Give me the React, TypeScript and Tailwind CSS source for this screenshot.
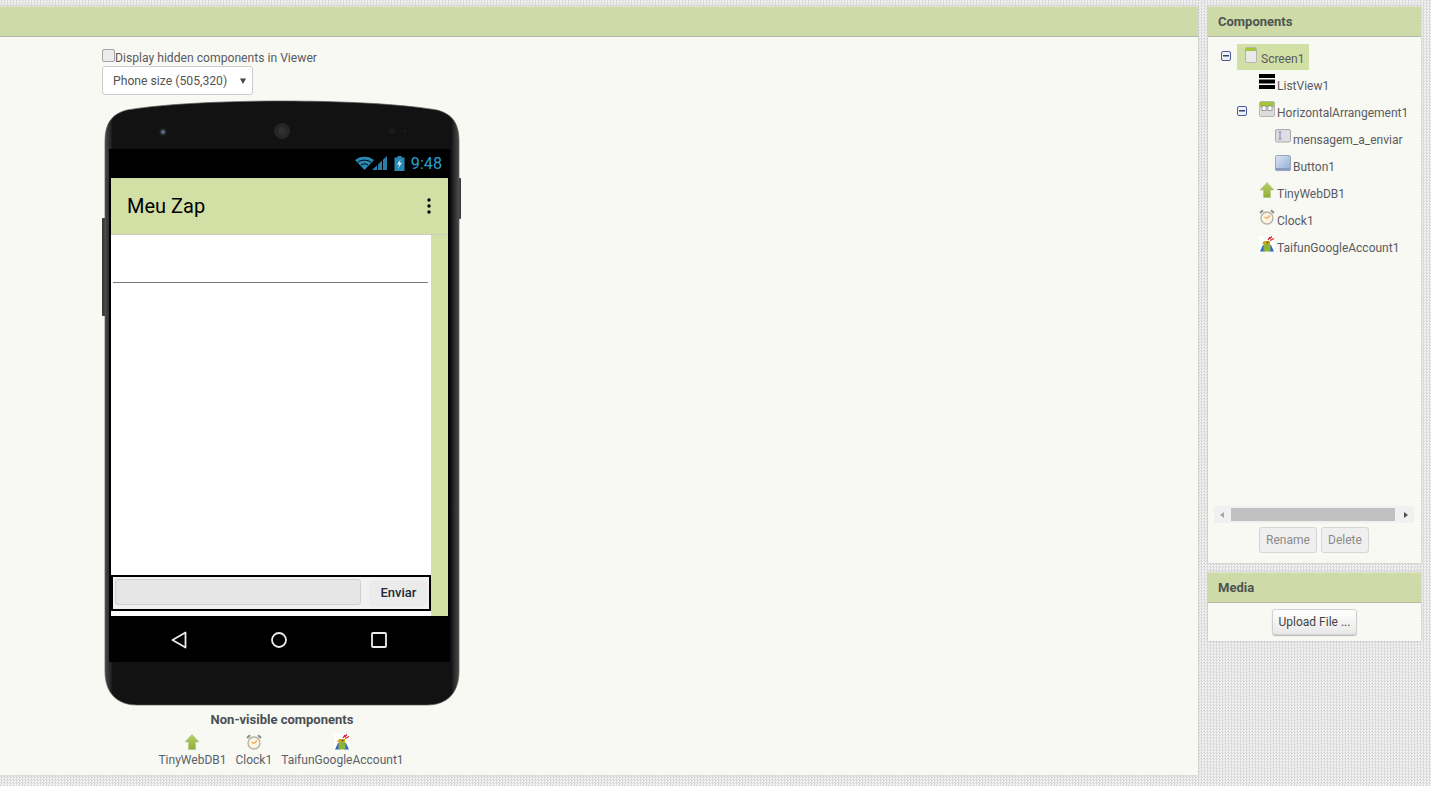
import React from "react";

const Minus = () => (
  <svg width="10" height="10" viewBox="0 0 10 10" className="block">
    <rect x="0.5" y="0.5" width="9" height="9" rx="1.5" fill="#eef0f6" stroke="#4a5a9a" />
    <rect x="2" y="4" width="6" height="1.5" fill="#3a3f70" />
  </svg>
);

const ScreenIcon = () => (
  <svg width="16" height="17" viewBox="0 0 16 17" className="block">
    <rect x="2.5" y="0.5" width="11" height="15" rx="1.5" fill="#e9e9e9" stroke="#b4b4b4" />
    <rect x="3" y="1" width="10" height="3" fill="#a4c639" />
  </svg>
);
const ListIcon = () => (
  <svg width="16" height="16" viewBox="0 0 16 16" className="block">
    <rect y="0" width="16" height="4" fill="#000" />
    <rect y="5.5" width="16" height="4" fill="#000" />
    <rect y="11" width="16" height="4" fill="#000" />
  </svg>
);
const HArrangeIcon = () => (
  <svg width="16" height="16" viewBox="0 0 16 16" className="block">
    <rect x="0.5" y="0.5" width="15" height="15" rx="1.5" fill="#dcdcdc" stroke="#b8b8b8" />
    <rect x="1" y="1" width="14" height="5" fill="#a4c639" />
    <rect x="3" y="5" width="4" height="4.5" fill="#fff" stroke="#8a8a8a" strokeWidth="0.8" />
    <rect x="9" y="5" width="4" height="4.5" fill="#fff" stroke="#8a8a8a" strokeWidth="0.8" />
  </svg>
);
const TextIcon = () => (
  <svg width="16" height="14" viewBox="0 0 16 14" className="block">
    <rect x="0.5" y="0.5" width="15" height="12.5" rx="1.5" fill="#dedee2" stroke="#a9a9a9" />
    <path d="M3.5 3h3M3.5 10h3M5 3v7" stroke="#7480b0" strokeWidth="0.9" fill="none" />
  </svg>
);
const ButtonIcon = () => (
  <svg width="16" height="16" viewBox="0 0 16 16" className="block">
    <defs>
      <linearGradient id="btnG" x1="0" y1="0" x2="1" y2="1">
        <stop offset="0" stopColor="#dfe8f5" />
        <stop offset="1" stopColor="#8ea9d4" />
      </linearGradient>
    </defs>
    <rect x="0.5" y="0.5" width="15" height="15" rx="1.5" fill="url(#btnG)" stroke="#9aa8be" />
    <rect x="0.5" y="13" width="15" height="2.5" fill="#8a9cc0" />
  </svg>
);
const ArrowIcon = () => (
  <svg width="16" height="16" viewBox="0 0 16 16" className="block">
    <defs>
      <linearGradient id="arrG" x1="0" y1="0" x2="0" y2="1">
        <stop offset="0" stopColor="#b8cf66" />
        <stop offset="1" stopColor="#8fae35" />
      </linearGradient>
    </defs>
    <path d="M8 0.5 15 8H11.5V15.5H4.5V8H1Z" fill="url(#arrG)" stroke="#aab98a" strokeWidth="0.5" />
  </svg>
);
const ClockIcon = () => (
  <svg width="16" height="16" viewBox="0 0 16 16" className="block">
    <path d="M1 4 4 1.2M15 4 12 1.2" stroke="#8c8c8c" strokeWidth="2" fill="none" />
    <circle cx="8" cy="9" r="6" fill="#fbf4e2" stroke="#b5b0a4" strokeWidth="1.3" />
    <path d="M8 9.5 11 6.5M8 9.5 5.5 8" stroke="#f0a94a" strokeWidth="1.2" fill="none" />
  </svg>
);
const TaifunIcon = () => (
  <svg width="16" height="16" viewBox="0 0 16 16" className="block">
    <rect width="16" height="16" fill="#fff" />
    <path d="M1 15.5 4 9h2v6.5ZM15 15.5 12 9h-2v6.5Z" fill="#2a69c4" />
    <rect x="4.5" y="8" width="7" height="7.5" rx="1" fill="#8fb23a" />
    <path d="M3 8 5 5h6v3Z" fill="#c9a716" />
    <circle cx="8.5" cy="6.5" r="0.8" fill="#333" />
    <path d="M9 4 11 1M11 4.5 15 2.5M10.5 3 13 0.5" stroke="#d8141c" strokeWidth="1.1" fill="none" />
  </svg>
);

const Row = ({ icon, label }: { icon: React.ReactNode; label: string }) => (
  <div className="flex h-[27px] items-center pl-[51px]">
    <div className="h-[27px] w-[16px] shrink-0 pt-[3px]">{icon}</div>
    <span className="ml-[2px] pt-[3px] whitespace-nowrap">{label}</span>
  </div>
);

const ChildRow = ({ icon, label, top }: { icon: React.ReactNode; label: string; top: string }) => (
  <div className="flex h-[27px] items-center pl-[67px]">
    <div className={`h-[27px] w-[16px] shrink-0 ${top}`}>{icon}</div>
    <span className="ml-[2px] pt-[3px] whitespace-nowrap">{label}</span>
  </div>
);

const NonVisible = ({ icon, label }: { icon: React.ReactNode; label: string }) => (
  <div className="flex flex-col items-center">
    {icon}
    <span className="mt-[2px] text-[12px] leading-[17px]">{label}</span>
  </div>
);

const Header = ({ children }: { children: React.ReactNode }) => (
  <div className="flex h-[31px] items-center border-b border-t border-b-[#b5b8a5] border-t-[#dfe5c8] bg-[#cedaa8] px-[10px] text-[13px] font-bold text-[#4c5450]">
    {children}
  </div>
);

export default function App() {
  return (
    <div className="flex h-[786px] w-[1431px] items-start overflow-hidden bg-[repeating-conic-gradient(#dadada_0_25%,#f4f4f4_0_50%)] bg-[length:3px_3px] pt-[6px] font-['Roboto',sans-serif] text-[12px] text-[#4a4f55]">
      {/* Viewer panel */}
      <div className="h-[769px] w-[1198px] shrink-0 bg-[#f8f9f3] shadow-[0_0_2px_#bbbbbb]">
        <div className="h-[31px] border-b border-t border-b-[#b5b8a5] border-t-[#dfe5c8] bg-[#cedaa8]" />
        <div className="pl-[102px] pt-[12px]">
          <label className="flex h-[16px] items-center leading-[16px]">
            <span className="mb-[4px] h-[13px] w-[13px] rounded-[2px] border border-[#a5a5a5] bg-[#ececec]" />
            <span className="pt-[2px] text-[12.15px] text-[#5a5a62]">Display hidden components in Viewer</span>
          </label>
          <div className="mt-[1px] flex h-[29px] w-[151px] items-center justify-between rounded-[3px] border border-[#cccccc] bg-white pl-[10px] pr-[6px] text-[12.2px] text-[#555]">
            <span className="pt-[1px]">Phone size (505,320)</span>
            <svg width="6" height="6" viewBox="0 0 6 6" className="block">
              <path d="M0 0.5h6L3 6Z" fill="#444" />
            </svg>
          </div>

          {/* Phone */}
          <div className="relative ml-[3px] mt-[6px] h-[604px] w-[354px]">
            <svg width="360" height="604" viewBox="0 0 360 604" className="absolute left-[-3px] top-0 overflow-visible">
              <defs>
                <linearGradient id="bezel" x1="0" y1="0" x2="1" y2="0">
                  <stop offset="0" stopColor="#4a4a4a" />
                  <stop offset="0.014" stopColor="#2a2a2a" />
                  <stop offset="0.022" stopColor="#121212" />
                  <stop offset="0.978" stopColor="#121212" />
                  <stop offset="0.986" stopColor="#2a2a2a" />
                  <stop offset="1" stopColor="#4a4a4a" />
                </linearGradient>
              </defs>
              <rect x="0" y="117" width="4" height="98" rx="1" fill="#3a3a3a" />
              <rect x="355" y="77" width="4" height="41" rx="1" fill="#3a3a3a" />
              <path
                d="M3 40C3 22 10 13 25 9C60 3 120 0 180 0C240 0 300 3 335 9C350 13 357 22 357 40V570C357 592 345 604 325 604H35C15 604 3 592 3 570Z"
                fill="url(#bezel)"
                stroke="#5a5a5a"
                strokeWidth="0.7"
              />
              <circle cx="61" cy="31" r="3.5" fill="#2a2b33" />
              <circle cx="61" cy="31" r="1.7" fill="#6a7698" />
              <circle cx="180" cy="30" r="8" fill="#262626" />
              <circle cx="180" cy="30" r="4" fill="#2f2f2f" />
              <circle cx="290" cy="30" r="2.5" fill="#1c1c1c" />
              <circle cx="303" cy="30" r="1.5" fill="#1c1c1c" />
            </svg>
            <div className="relative pl-[4px] pt-[48px]">
              <div className="h-[513px] w-[341px] bg-black">
                <div className="flex h-[29px] items-center justify-end pr-[8px] text-[16px] text-[#2a9fd0]">
                  <svg width="32" height="15" viewBox="0 0 32 15" className="block">
                    <path d="M0 4C5 -0.5 14 -0.5 19 4L9.5 14Z" fill="#2a88b5" />
                    <path d="M3 6.2C6 3.5 13 3.5 16 6.2M6 9C8 7.5 11 7.5 13 9" stroke="#000" strokeWidth="1" fill="none" />
                    <path d="M17 14 32 0V14Z" fill="#2a7ea8" />
                    <path d="M22.5 14V8M27.5 14V4" stroke="#000" strokeWidth="1" />
                  </svg>
                  <svg width="11" height="15" viewBox="0 0 11 15" className="ml-[7px] block">
                    <path d="M3.5 0h4v1.5h3V15H0.5V1.5h3Z" fill="#2a88b5" />
                    <path d="M6.5 3.5 3 8.5H5.2L4 12.5 8 6.8H5.7Z" fill="#d8eef8" />
                  </svg>
                  <span className="ml-[6px] pt-[1px] text-[16.2px]">9:48</span>
                </div>
                <div className="mx-[2px] w-[337px]">
                  <div className="flex h-[56px] items-center justify-between bg-[#d2dfa5] pl-[16px] pr-[17px] text-[20px] text-black">
                    <span>Meu Zap</span>
                    <svg width="4" height="16" viewBox="0 0 4 16" className="block">
                      <circle cx="2" cy="2" r="1.7" fill="#000" />
                      <circle cx="2" cy="8" r="1.7" fill="#000" />
                      <circle cx="2" cy="14" r="1.7" fill="#000" />
                    </svg>
                  </div>
                  <div className="h-[1px] bg-[#c9cdbd]" />
                  <div className="flex h-[381px]">
                    <div className="flex w-[320px] flex-col bg-white">
                      <div className="h-[340px] pl-[2px] pr-[3px] pt-[47px]">
                        <div className="h-[1px] bg-[#7a7a7a]" />
                      </div>
                      <div className="flex h-[36px] items-start border-2 border-black bg-[#f1f1f1] pl-[2px] pr-[1px] pt-[2px]">
                        <div className="h-[26px] w-[246px] rounded-[3px] border border-[#cfcfcf] bg-[#e6e6e6]" />
                        <div className="ml-[8px] mt-[1px] flex h-[27px] w-[59px] items-center justify-center rounded-[6px] bg-[#ebebeb] pb-[2px] text-[13px] font-medium text-[#222a38]">
                          Enviar
                        </div>
                      </div>
                      <div className="h-[5px] bg-white" />
                    </div>
                    <div className="w-[17px] bg-[#d2dfa5]" />
                  </div>
                </div>
                <div className="flex h-[46px] items-center pl-[62px] pt-[1px]">
                  <svg width="16" height="18" viewBox="0 0 16 18" className="block">
                    <path d="M14.5 1.5V16.5L1.5 9Z" fill="none" stroke="#ececec" strokeWidth="1.8" strokeLinejoin="round" />
                  </svg>
                  <svg width="16" height="16" viewBox="0 0 16 16" className="ml-[84px] block">
                    <circle cx="8" cy="8" r="7" fill="none" stroke="#ececec" strokeWidth="1.8" />
                  </svg>
                  <svg width="16" height="16" viewBox="0 0 16 16" className="ml-[84px] block">
                    <rect x="1" y="1" width="14" height="14" rx="1" fill="none" stroke="#ececec" strokeWidth="1.8" />
                  </svg>
                </div>
              </div>
            </div>
          </div>

          <div className="ml-[3px] mt-[6px] w-[354px] text-center text-[13px] font-bold leading-[17px] text-[#4a4f55]">
            Non-visible components
          </div>
          <div className="ml-[2px] mt-[6px] flex w-[354px] justify-center gap-[9px] text-[#5a6068]">
            <NonVisible icon={<ArrowIcon />} label="TinyWebDB1" />
            <NonVisible icon={<ClockIcon />} label="Clock1" />
            <NonVisible icon={<TaifunIcon />} label="TaifunGoogleAccount1" />
          </div>
        </div>
      </div>

      {/* Right column */}
      <div className="ml-[10px] w-[213px] shrink-0">
        <div className="h-[557px] bg-[#f8f9f3] shadow-[0_0_2px_#bbbbbb]">
          <Header>Components</Header>
          <div className="pt-[7px] text-[#5a5a62]">
            <div className="flex h-[27px] items-start">
              <div className="w-[13px] shrink-0" />
              <div className="mt-[7px] shrink-0">
                <Minus />
              </div>
              <div className="ml-[6px] flex h-[26px] w-[72px] items-start bg-[#d2e0a6] pl-[6px] pt-[3px]">
                <ScreenIcon />
                <span className="ml-[2px] pt-[4px] leading-[16px]">Screen1</span>
              </div>
            </div>
            <Row icon={<ListIcon />} label="ListView1" />
            <div className="flex h-[27px] items-center">
              <div className="flex w-[39px] shrink-0 justify-end pb-[2px]">
                <Minus />
              </div>
              <div className="ml-[12px] h-[27px] w-[16px] shrink-0 pt-[3px]">
                <HArrangeIcon />
              </div>
              <span className="ml-[2px] pt-[3px] whitespace-nowrap">HorizontalArrangement1</span>
            </div>
            <ChildRow icon={<TextIcon />} label="mensagem_a_enviar" top="pt-[4px]" />
            <ChildRow icon={<ButtonIcon />} label="Button1" top="pt-[3px]" />
            <Row icon={<ArrowIcon />} label="TinyWebDB1" />
            <Row icon={<ClockIcon />} label="Clock1" />
            <Row icon={<TaifunIcon />} label="TaifunGoogleAccount1" />
          </div>
          <div className="ml-[6px] mt-[246px] flex h-[17px] w-[200px] items-center bg-[#f1f1f1]">
            <svg width="17" height="16" viewBox="0 0 17 16" className="block">
              <path d="M10 5V11L6 8Z" fill="#a8a8a8" />
            </svg>
            <div className="h-[13px] w-[164px] bg-[#c1c1c1]" />
            <svg width="19" height="16" viewBox="0 0 19 16" className="block">
              <path d="M9 5V11L13 8Z" fill="#505050" />
            </svg>
          </div>
          <div className="mt-[4px] flex justify-center gap-[4px] pr-[1px] text-[12px] text-[#8a8a8a]">
            <div className="flex h-[26px] w-[58px] items-center justify-center rounded-[3px] border border-[#d6d6d6] bg-[#efefef]">
              Rename
            </div>
            <div className="flex h-[26px] w-[48px] items-center justify-center rounded-[3px] border border-[#d6d6d6] bg-[#efefef]">
              Delete
            </div>
          </div>
        </div>
        <div className="mt-[9px] h-[69px] bg-[#f8f9f3] shadow-[0_0_2px_#bbbbbb]">
          <Header>Media</Header>
          <div className="flex justify-center pt-[6px]">
            <div className="flex h-[26px] w-[85px] items-center justify-center rounded-[3px] border border-[#d0d0d0] bg-[linear-gradient(#ffffff,#e8e8e8)] text-[12px] text-[#444] shadow-[0_1px_1px_#bbb]">
              Upload File ...
            </div>
          </div>
        </div>
      </div>
    </div>
  );
}
